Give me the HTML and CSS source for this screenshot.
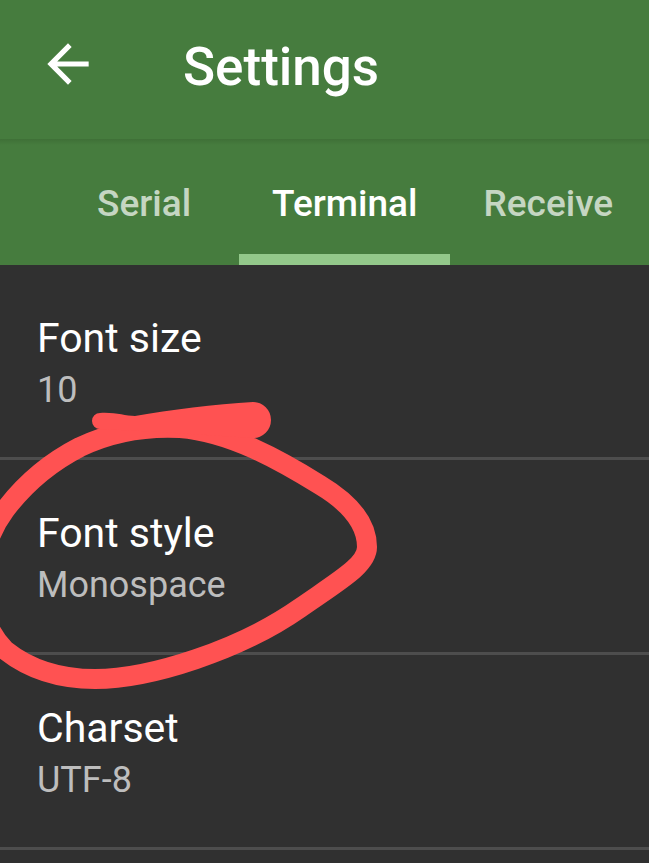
FILE: index.html
```html
<!DOCTYPE html>
<html lang="en">
<head>
  <meta charset="UTF-8">
  <meta name="viewport" content="width=device-width, initial-scale=1.0">
  <title>Settings</title>
  <link rel="stylesheet" href="styles.css">
</head>
<body>
  <header class="app-bar">
    <svg class="back-icon" viewBox="0 0 24 24">
      <path d="M20 11H7.83l5.59-5.59L12 4l-8 8 8 8 1.41-1.41L7.83 13H20v-2z"/>
    </svg>
    <h1 class="title">Settings</h1>
  </header>
  <nav class="tabs">
    <div class="tab">Serial</div>
    <div class="tab tab--active">Terminal</div>
    <div class="tab">Receive</div>
  </nav>
  <ul class="prefs">
    <li class="pref">
      <div class="pref-title">Font size</div>
      <div class="pref-value">10</div>
    </li>
    <li class="pref">
      <div class="pref-title">Font style</div>
      <div class="pref-value">Monospace</div>
    </li>
    <li class="pref">
      <div class="pref-title">Charset</div>
      <div class="pref-value">UTF-8</div>
    </li>
  </ul>

  <!-- hand drawn mark over the second row -->
  <svg class="scribble" viewBox="0 0 649 863">
    <path class="scribble-loop" d="M367 547 C367 520 345 500 320 485 C280 460 230 432 180 428 C140 426 105 435 80 447 C45 465 20 490 5 510 C-25 550 -30 615 5 650 C30 670 60 679 95 679 C150 679 240 650 300 608 C340 580 367 565 367 547 Z"/>
    <path class="scribble-tail" d="M100 413 C115 412 125 416 135 416 C170 410 215 404 253 402 A18 18 0 0 1 253 438 L160 432 L100 429 A8 8 0 0 1 100 413 Z"/>
  </svg>
</body>
</html>
```

FILE: styles.css
```css
* {
  box-sizing: border-box;
}

body {
  margin: 0;
  width: 649px;
  height: 863px;
  overflow: hidden;
  background-color: #303030;
  font-family: Roboto, "Noto Sans", sans-serif;
  position: relative;
}

.app-bar {
  height: 139px;
  background-color: #467c3e;
  display: flex;
  align-items: flex-start;
  padding: 33px 0 0 37px;
}

.back-icon {
  width: 62px;
  height: 62px;
  fill: white;
  flex-shrink: 0;
}

.title {
  margin: 4px 0 0 84px;
  font-size: 53px;
  line-height: 61px;
  font-weight: 500;
  color: white;
}

.tabs {
  height: 126px;
  display: flex;
  padding-left: 64px;
  background: linear-gradient(#3f7037, #467c3e 6px);
}

.tab {
  height: 126px;
  padding: 43px 33px 0;
  font-size: 37px;
  line-height: 43px;
  font-weight: 500;
  color: rgba(255, 255, 255, 0.7);
  border-bottom: 11px solid transparent;
  white-space: nowrap;
}

.tab:first-child {
  margin-right: 15px;
}

.tab--active {
  color: white;
  border-bottom-color: #93c88a;
}

.prefs {
  list-style: none;
  margin: 0;
  padding: 0;
}

.pref {
  height: 195px;
  padding: 49px 37px 0;
  border-bottom: 3px solid #4d4d4d;
}

.pref-title {
  font-size: 41px;
  line-height: 48px;
  color: white;
}

.pref-value {
  margin-top: 7px;
  font-size: 36px;
  line-height: 42px;
  color: #bdbdbd;
}

.scribble {
  position: absolute;
  top: 0;
  left: 0;
  width: 649px;
  height: 863px;
  pointer-events: none;
  overflow: visible;
}

.scribble-loop {
  fill: none;
  stroke: #ff5252;
  stroke-width: 20;
  stroke-linejoin: round;
}

.scribble-tail {
  fill: #ff5252;
}
```
